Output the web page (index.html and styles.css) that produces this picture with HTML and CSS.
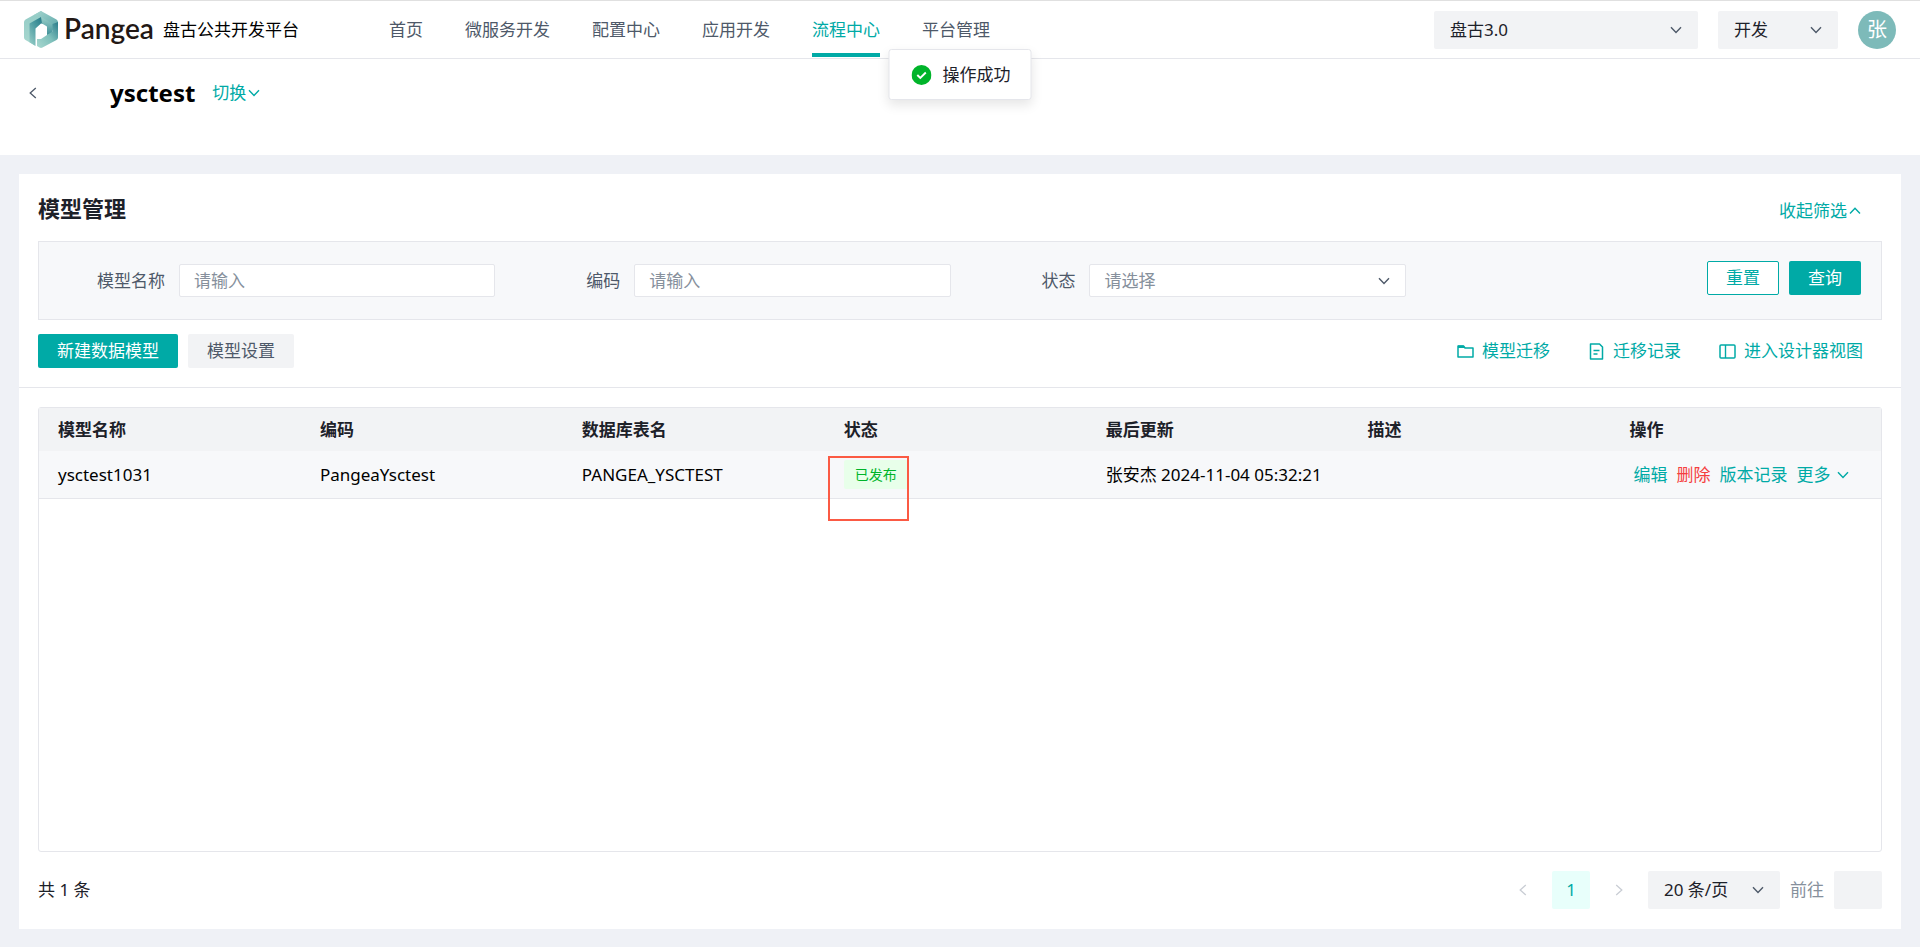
FILE: index.html
```html
<!DOCTYPE html>
<html lang="zh-CN">
<head>
<meta charset="utf-8">
<meta name="viewport" content="width=device-width, initial-scale=1">
<title>盘古公共开发平台</title>
<link rel="stylesheet" href="styles.css">
</head>
<body>
<svg class="sprite" aria-hidden="true">
  <symbol id="chevron-down" viewBox="0 0 12 12"><path d="M1 3.2 6 8.5l5-5.3" fill="none" stroke="currentColor" stroke-width="1.4"/></symbol>
  <symbol id="chevron-up" viewBox="0 0 12 12"><path d="M1 8.5 6 3.2l5 5.3" fill="none" stroke="currentColor" stroke-width="1.4"/></symbol>
  <symbol id="chevron-left" viewBox="0 0 12 12"><path d="M8.8 1 3.2 6l5.6 5" fill="none" stroke="currentColor" stroke-width="1.3"/></symbol>
  <symbol id="chevron-right" viewBox="0 0 12 12"><path d="M3.2 1l5.6 5-5.6 5" fill="none" stroke="currentColor" stroke-width="1.3"/></symbol>
</svg>

<header class="topbar">
  <a class="brand" href="#">
    <svg class="brand-mark" viewBox="0 0 34 37" aria-hidden="true">
      <defs>
        <linearGradient id="g1" x1="0" y1="0" x2="0" y2="1"><stop offset="0" stop-color="#92cbc5"/><stop offset="1" stop-color="#a9d8d0"/></linearGradient>
        <linearGradient id="g2" x1="0" y1="0" x2="1" y2="1"><stop offset="0" stop-color="#a5d6cf"/><stop offset="1" stop-color="#5aa5a8"/></linearGradient>
        <linearGradient id="g3" x1="1" y1="0" x2="0" y2="1"><stop offset="0" stop-color="#156a7c"/><stop offset="0.5" stop-color="#4c9ba1"/><stop offset="1" stop-color="#9bd0c9"/></linearGradient>
        <linearGradient id="g4" x1="1" y1="0" x2="0" y2="1"><stop offset="0" stop-color="#2b7c8a"/><stop offset="0.5" stop-color="#7fc0bb"/><stop offset="1" stop-color="#a9d8d0"/></linearGradient>
        <linearGradient id="g5" x1="0" y1="0" x2="0" y2="1"><stop offset="0" stop-color="#9ad0c9"/><stop offset="1" stop-color="#3f8f98"/></linearGradient>
      </defs>
      <path d="M17 0 1.500 8.500Q0 9.500 0 11v15.500q0 1.500 1.500 2.500L11 34.500V17L17 12l6-6z" fill="url(#g1)"/>
      <path d="M17 6 5.500 12.500V31.300L11.500 35V17.500L17 12.500l3 .5 4-3z" fill="url(#g3)"/>
      <path d="M17 0 32.500 8.500Q34 9.500 34 11v8L23 20v-4.500L17 6 10 4z" fill="url(#g2)"/>
      <path d="M17 6l6 3.500 5.500 3.500v10L23 24v-8.500l-5-3z" fill="url(#g5)"/>
      <path d="M34 11v15.500q0 1.500-1.500 2.500L18.500 36.500q-1.500.800-3 0l-2.500-1.500V28l4 0 6-4 5.500-3.500V13z" fill="url(#g4)"/>
    </svg>
    <span class="brand-name">Pangea</span>
    <span class="brand-sub">盘古公共开发平台</span>
  </a>
  <nav class="nav">
    <a href="#">首页</a>
    <a href="#">微服务开发</a>
    <a href="#">配置中心</a>
    <a href="#">应用开发</a>
    <a href="#" class="active" aria-current="page">流程中心</a>
    <a href="#">平台管理</a>
  </nav>
  <div class="topbar-tools">
    <div class="select select-project">
      <select aria-label="项目"><option>盘古3.0</option></select>
      <svg class="icon"><use href="#chevron-down"/></svg>
    </div>
    <div class="select select-env">
      <select aria-label="环境"><option>开发</option></select>
      <svg class="icon"><use href="#chevron-down"/></svg>
    </div>
    <button class="avatar" type="button">张</button>
  </div>
</header>

<div class="toast" role="status">
  <svg class="toast-icon" viewBox="0 0 20 20" aria-hidden="true"><circle cx="10" cy="10" r="10" fill="#00b42a"/><path d="M5.800 10l3 3 5.500-5.500" fill="none" stroke="#fff" stroke-width="1.900"/></svg>
  <span>操作成功</span>
</div>

<section class="page-head">
  <button class="back" type="button" aria-label="返回"><svg class="icon"><use href="#chevron-left"/></svg></button>
  <h1>ysctest</h1>
  <button class="link" type="button">切换<svg class="icon"><use href="#chevron-down"/></svg></button>
</section>

<main class="card">
  <div class="card-head">
    <h2>模型管理</h2>
    <button class="link" type="button">收起筛选<svg class="icon"><use href="#chevron-up"/></svg></button>
  </div>

  <form class="filter">
    <div class="field">
      <label for="name">模型名称</label>
      <input id="name" type="text" placeholder="请输入">
    </div>
    <div class="field">
      <label for="code">编码</label>
      <input id="code" type="text" placeholder="请输入">
    </div>
    <div class="field">
      <label for="status">状态</label>
      <div class="select select-outline">
        <select id="status"><option>请选择</option></select>
        <svg class="icon"><use href="#chevron-down"/></svg>
      </div>
    </div>
    <div class="filter-actions">
      <button class="btn btn-outline" type="reset">重置</button>
      <button class="btn btn-primary" type="button">查询</button>
    </div>
  </form>

  <div class="toolbar">
    <button class="btn btn-primary" type="button">新建数据模型</button>
    <button class="btn btn-plain" type="button">模型设置</button>
    <div class="toolbar-links">
      <a class="tool" href="#">
        <svg viewBox="0 0 17 17" aria-hidden="true"><path d="M1 14V3h5.500l1.500 2H16v9z" fill="none" stroke="currentColor" stroke-width="1.500" stroke-linejoin="round"/><path d="M1 2.500h5.500l2 2.500H1z" fill="currentColor"/></svg>
        模型迁移
      </a>
      <a class="tool" href="#">
        <svg viewBox="0 0 17 17" aria-hidden="true"><path d="M2.500 1h9l3 3v12h-12z" fill="none" stroke="currentColor" stroke-width="1.500" stroke-linejoin="round"/><path d="M5.500 7.500h6M5.500 11h4" fill="none" stroke="currentColor" stroke-width="1.400"/></svg>
        迁移记录
      </a>
      <a class="tool" href="#">
        <svg viewBox="0 0 17 17" aria-hidden="true"><rect x="1" y="2" width="15" height="13" rx="1" fill="none" stroke="currentColor" stroke-width="1.500"/><path d="M6.500 2v13" stroke="currentColor" stroke-width="1.400"/></svg>
        进入设计器视图
      </a>
    </div>
  </div>

  <div class="body">
    <div class="table-wrap">
      <table>
        <thead>
          <tr><th>模型名称</th><th>编码</th><th>数据库表名</th><th>状态</th><th>最后更新</th><th>描述</th><th>操作</th></tr>
        </thead>
        <tbody>
          <tr>
            <td>ysctest1031</td>
            <td>PangeaYsctest</td>
            <td>PANGEA_YSCTEST</td>
            <td class="status-cell"><span class="tag">已发布</span><span class="marker"></span></td>
            <td>张安杰 2024-11-04 05:32:21</td>
            <td></td>
            <td>
              <div class="ops">
                <a href="#">编辑</a>
                <a href="#" class="danger">删除</a>
                <a href="#">版本记录</a>
                <a href="#">更多<svg class="icon"><use href="#chevron-down"/></svg></a>
              </div>
            </td>
          </tr>
        </tbody>
      </table>
    </div>

    <footer class="pager">
      <span class="total">共 1 条</span>
      <button class="page-btn" type="button" aria-label="上一页" disabled><svg class="icon"><use href="#chevron-left"/></svg></button>
      <button class="page-btn current" type="button">1</button>
      <button class="page-btn" type="button" aria-label="下一页" disabled><svg class="icon"><use href="#chevron-right"/></svg></button>
      <div class="select select-size">
        <select aria-label="每页条数"><option>20 条/页</option></select>
        <svg class="icon"><use href="#chevron-down"/></svg>
      </div>
      <label for="jump">前往</label>
      <input id="jump" type="text">
    </footer>
  </div>
</main>
</body>
</html>
```
FILE: styles.css
```css
:root {
  --primary: #00aaa6;
  --text: #1d2129;
  --text-2: #4e5969;
  --text-3: #86909c;
  --line: #e5e6eb;
  --fill: #f2f3f5;
  --fill-light: #f7f8fa;
}

* {
  box-sizing: border-box;
}

body {
  margin: 0;
  min-height: 100vh;
  display: flex;
  flex-direction: column;
  background: #eff1f6;
  color: var(--text);
  font: 17px/24px "Noto Sans", "Noto Sans CJK SC", sans-serif;
}

button,
input,
select {
  font: inherit;
  color: inherit;
  margin: 0;
  padding: 0;
  border: 0;
  background: none;
}

a {
  color: inherit;
  text-decoration: none;
}

h1,
h2 {
  margin: 0;
}

.sprite {
  position: absolute;
  width: 0;
  height: 0;
}

.icon {
  width: 12px;
  height: 12px;
  flex: none;
}

/* Top bar */
.topbar {
  display: flex;
  align-items: center;
  height: 59px;
  padding: 0 24px;
  border-top: 1px solid #e0e0e0;
  border-bottom: 1px solid var(--line);
  background: #fff;
}

.brand {
  display: flex;
  align-items: center;
  width: 365px;
}

.brand-mark {
  width: 34px;
  height: 37px;
  margin-right: 6px;
}

.brand-name {
  width: 99px;
  padding-bottom: 3px;
  font: 600 28px/36px Lato, sans-serif;
  color: #231815;
}

.brand-sub {
  color: #000;
}

.nav {
  display: flex;
  align-self: stretch;
  gap: 42px;
  color: var(--text-2);
}

.nav a {
  display: flex;
  align-items: center;
  margin-bottom: 1px;
  padding-top: 6px;
  border-bottom: 4px solid transparent;
}

.nav .active {
  color: var(--primary);
  border-bottom-color: var(--primary);
}

.topbar-tools {
  display: flex;
  align-items: center;
  gap: 20px;
  margin-left: auto;
}

.select {
  position: relative;
  height: 38px;
}

.select select {
  width: 100%;
  height: 100%;
  padding: 0 32px 0 16px;
  border-radius: 2px;
  background: var(--fill);
  appearance: none;
}

.select .icon {
  position: absolute;
  top: 50%;
  right: 16px;
  margin-top: -6px;
  color: var(--text-2);
  pointer-events: none;
}

.select-project {
  width: 264px;
}

.select-env {
  width: 120px;
}

.avatar {
  width: 38px;
  height: 38px;
  border-radius: 50%;
  background: #7dbab9;
  color: #fff;
  font-size: 20px;
}

/* Message */
.toast {
  position: absolute;
  top: 49px;
  left: 50%;
  display: flex;
  align-items: center;
  gap: 11px;
  height: 51px;
  padding: 0 20px 0 22px;
  transform: translateX(-50%);
  border: 1px solid var(--line);
  border-radius: 3px;
  background: #fff;
  box-shadow: 0 5px 12px rgba(0, 0, 0, 0.1);
  white-space: nowrap;
}

.toast-icon {
  width: 20px;
  height: 20px;
}

/* Page heading */
.page-head {
  display: flex;
  align-items: center;
  height: 96px;
  padding: 0 27px 29px;
  background: #fff;
}

.back {
  display: flex;
  width: 83px;
  color: var(--text-2);
}

.page-head h1 {
  margin-right: 17px;
  font-size: 24px;
  line-height: 32px;
  color: #000;
}

.link {
  display: flex;
  align-items: center;
  gap: 2px;
  color: var(--primary);
}

/* Card */
.card {
  flex: 1;
  display: flex;
  flex-direction: column;
  margin: 19px 19px 18px;
  background: #fff;
}

.card-head {
  display: flex;
  align-items: baseline;
  justify-content: space-between;
  height: 67px;
  padding: 18px 40px 0 19px;
}

.card-head h2 {
  font-size: 22px;
  line-height: 32px;
}

.filter {
  display: grid;
  grid-template-columns: repeat(4, 1fr);
  gap: 19px;
  margin: 0 19px;
  padding: 19px 20px;
  border: 1px solid var(--line);
  background: var(--fill-light);
}

.field {
  display: grid;
  grid-template-columns: 11fr 29fr;
  align-items: center;
  min-height: 39px;
}

.field label {
  padding-right: 14px;
  text-align: right;
  color: var(--text-2);
}

.field input {
  width: 100%;
  height: 33px;
  padding: 0 14px;
  border: 1px solid var(--line);
  border-radius: 2px;
  background: #fff;
}

.field input::placeholder {
  color: var(--text-3);
  opacity: 1;
}

.select-outline {
  height: 33px;
}

.select-outline select {
  padding-left: 14px;
  border: 1px solid var(--line);
  background: #fff;
  color: var(--text-3);
}

.filter-actions {
  display: flex;
  justify-content: flex-end;
  align-items: flex-start;
  gap: 10px;
}

.btn {
  height: 34px;
  padding: 0 18px;
  border: 1px solid transparent;
  border-radius: 2px;
}

.btn-primary {
  background: var(--primary);
  color: #fff;
}

.btn-outline {
  border-color: var(--primary);
  background: #fff;
  color: var(--primary);
}

.btn-plain {
  background: var(--fill);
  color: var(--text-2);
}

.toolbar {
  display: flex;
  align-items: center;
  gap: 10px;
  padding: 14px 38px 19px 19px;
  border-bottom: 1px solid var(--line);
}

.toolbar-links {
  display: flex;
  gap: 38px;
  margin-left: auto;
  color: var(--primary);
}

.tool {
  display: flex;
  align-items: center;
  gap: 8px;
}

.tool svg {
  width: 17px;
  height: 17px;
}

/* Table */
.body {
  flex: 1;
  display: flex;
  flex-direction: column;
  padding: 19px 19px 20px;
}

.table-wrap {
  flex: 1;
  border: 1px solid var(--line);
  border-radius: 3px;
}

table {
  width: 100%;
  table-layout: fixed;
  border-collapse: separate;
  border-spacing: 0;
}

th,
td {
  padding: 0 0 0 19px;
  text-align: left;
  white-space: nowrap;
}

th {
  width: 14.22%;
  height: 43px;
  background: var(--fill);
}

th:last-child {
  width: auto;
}

td {
  height: 48px;
  border-bottom: 1px solid var(--line);
  background: var(--fill-light);
  color: #000;
}

.status-cell {
  position: relative;
}

.tag {
  display: inline-block;
  padding: 0 11px;
  border-radius: 2px;
  background: #e8ffea;
  color: #00b42a;
  font-size: 14px;
  line-height: 29px;
}

.marker {
  position: absolute;
  top: 5px;
  left: 3px;
  width: 81px;
  height: 65px;
  border: 2px solid #fb5a44;
}

.ops {
  display: flex;
  gap: 9px;
  padding-left: 4px;
  color: var(--primary);
}

.ops a {
  display: flex;
  align-items: center;
  gap: 6px;
}

.ops .danger {
  color: #f53f3f;
}

/* Pagination */
.pager {
  display: flex;
  align-items: center;
  gap: 10px;
  padding-top: 19px;
}

.total {
  margin-right: auto;
}

.page-btn {
  display: flex;
  align-items: center;
  justify-content: center;
  width: 38px;
  height: 38px;
  border-radius: 2px;
}

.page-btn:disabled {
  color: #c9cdd4;
}

.page-btn.current {
  background: #e8fffb;
  color: var(--primary);
}

.select-size {
  width: 132px;
}

.pager label {
  color: var(--text-3);
}

.pager input {
  width: 48px;
  height: 38px;
  padding: 0 8px;
  border-radius: 2px;
  background: var(--fill);
}
```
